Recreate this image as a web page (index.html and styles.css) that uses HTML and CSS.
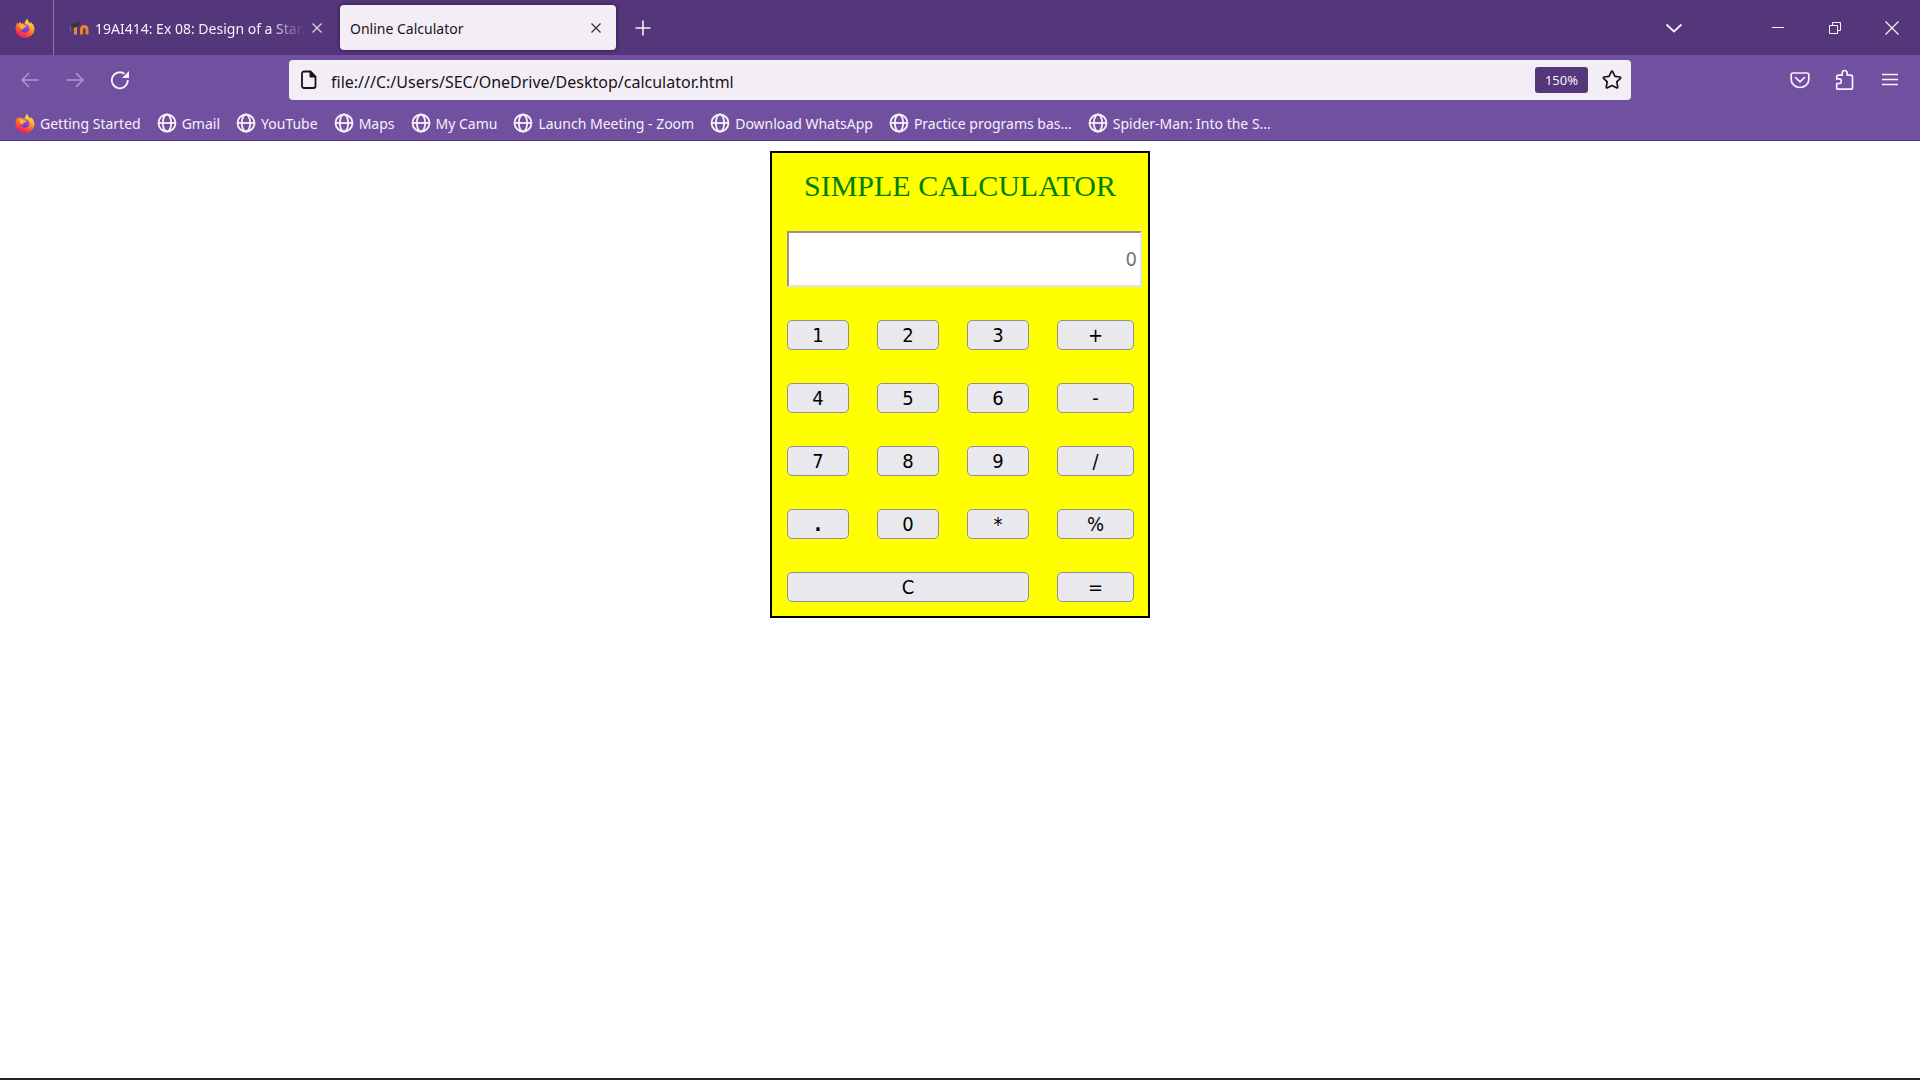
FILE: index.html
```html
<!DOCTYPE html>
<html lang="en">
<head>
<meta charset="utf-8">
<meta name="viewport" content="width=device-width, initial-scale=1">
<title>Online Calculator</title>
<link rel="stylesheet" href="styles.css">
</head>
<body>
<svg class="defs" width="0" height="0" aria-hidden="true">
  <defs>
    <linearGradient id="flame" x1="0.8" y1="0" x2="0.3" y2="1">
      <stop offset="0" stop-color="#fff44f"/>
      <stop offset="0.4" stop-color="#ffa72a"/>
      <stop offset="0.7" stop-color="#ff5038"/>
      <stop offset="1" stop-color="#f0156a"/>
    </linearGradient>
    <linearGradient id="orb" x1="0.7" y1="0" x2="0.3" y2="1">
      <stop offset="0" stop-color="#a04be0"/>
      <stop offset="1" stop-color="#5a3fd0"/>
    </linearGradient>
    <symbol id="fox" viewBox="0 0 20 20">
      <path fill="url(#flame)" d="M12.6 0.4c-.3 1.5.3 2.5 1.400 3.500l1.800 2c-.1-.9-.3-1.500-.6-2.200 2.700 1.600 4.300 4.500 4.300 7.500 0 4.900-4.200 8.500-9.500 8.500S.5 16 .5 11c0-2.800 1-5.200 2.300-6.800l.6 1.700L5.200 3.500l.8 2.300c1.200-.3 2.400-.2 3.400.1.600-2.500 1.700-4.400 3.200-5.500z"/>
      <circle cx="10" cy="10.500" r="4.300" fill="url(#orb)"/>
      <path fill="#ffb52e" d="M4.500 6.500c1.700-.7 3.800-.4 5 .8l2 .6c-.3 1-1.500 1.500-2.900 1.700-.6 1 .2 2-.8 2.200-1.500-.4-3.600-2.500-3.300-5.300z"/>
    </symbol>
    <symbol id="globe" viewBox="0 0 20 20">
      <g fill="none" stroke="currentColor" stroke-width="1.800">
        <circle cx="10" cy="10" r="8.500"/>
        <ellipse cx="10" cy="10" rx="4.200" ry="8.500"/>
        <path d="M1.500 10h17"/>
      </g>
    </symbol>
    <symbol id="cross" viewBox="0 0 12 12">
      <path d="M1.500 1.500l9 9M10.500 1.500l-9 9" fill="none" stroke="currentColor" stroke-width="1.300"/>
    </symbol>
  </defs>
</svg>

<header class="browser">
  <div class="tabstrip">
    <button class="view-button" aria-label="Firefox View"><svg width="20" height="20"><use href="#fox"/></svg></button>
    <div class="tabs">
      <div class="tab">
        <svg class="favicon" width="20" height="16" viewBox="0 0 20 16" aria-hidden="true">
          <path d="M6.500 14.500V7M12.500 14.500V9.500c0-4 5.500-4 5.500 0v5" fill="none" stroke="#e98532" stroke-width="3"/>
          <path d="M1 5L7 2l5-.5-1.500 4L5 8z" fill="#3a3340"/>
          <path d="M1.500 5v8" stroke="#77506a" stroke-width="1.500"/>
        </svg>
        <span class="tab-title fade">19AI414: Ex 08: Design of a Stan</span>
        <button class="tab-close" aria-label="Close tab"><svg width="12" height="12"><use href="#cross"/></svg></button>
      </div>
      <div class="tab active">
        <span class="tab-title">Online Calculator</span>
        <button class="tab-close" aria-label="Close tab"><svg width="12" height="12"><use href="#cross"/></svg></button>
      </div>
    </div>
    <button class="tool" aria-label="New tab"><svg width="16" height="16" viewBox="0 0 16 16"><path d="M8 .5v15M.5 8h15" stroke="currentColor" stroke-width="1.600"/></svg></button>
    <button class="tool list-tabs" aria-label="List all tabs"><svg width="18" height="10" viewBox="0 0 18 10"><path d="M1.500 1.500L9 8.500l7.500-7" fill="none" stroke="currentColor" stroke-width="1.800"/></svg></button>
    <div class="window-controls">
      <button aria-label="Minimize"><svg width="12" height="12" viewBox="0 0 12 12"><path d="M0 5.500h12" stroke="currentColor"/></svg></button>
      <button aria-label="Restore"><svg width="12" height="12" viewBox="0 0 12 12"><path d="M.5 3.500h8v8h-8zM3.500 3V.5h8v8H9" fill="none" stroke="currentColor"/></svg></button>
      <button aria-label="Close"><svg width="14" height="14" viewBox="0 0 14 14"><path d="M.5.5l13 13M13.500.5l-13 13" stroke="currentColor" stroke-width="1.200"/></svg></button>
    </div>
  </div>

  <div class="navbar">
    <div class="nav-group">
      <button class="tool dim" aria-label="Back"><svg width="18" height="16" viewBox="0 0 18 16"><path d="M17.500 8H1M8 1L1 8l7 7" fill="none" stroke="currentColor" stroke-width="1.500"/></svg></button>
      <button class="tool dim" aria-label="Forward"><svg width="18" height="16" viewBox="0 0 18 16"><path d="M.5 8H17M10 1l7 7-7 7" fill="none" stroke="currentColor" stroke-width="1.500"/></svg></button>
      <button class="tool" aria-label="Reload"><svg width="20" height="20" viewBox="0 0 20 20"><path d="M17.800 10A8 8 0 1 1 14.500 3.800" fill="none" stroke="currentColor" stroke-width="1.800"/><path d="M19 1v7h-7z" fill="currentColor"/></svg></button>
    </div>
    <div class="urlbar">
      <svg width="16" height="20" viewBox="0 0 16 20" aria-hidden="true"><path d="M3 1.500h6.500l5 5V16a2 2 0 0 1-2 2H3a2 2 0 0 1-2-2V3.500a2 2 0 0 1 2-2z" fill="none" stroke="currentColor" stroke-width="1.800"/><path d="M9 1.500V7h5.500z" fill="currentColor" stroke="currentColor"/></svg>
      <input class="url" type="text" aria-label="Address" value="file:///C:/Users/SEC/OneDrive/Desktop/calculator.html">
      <button class="zoom">150%</button>
      <button class="star" aria-label="Bookmark this page"><svg width="20" height="20" viewBox="0 0 20 20"><path d="M10 1.200q.5 0 .8.600l2.200 4.500 5 .7q1.200.3.400 1.300l-3.600 3.500.9 5.100q0 1.300-1.200.9L10 15.400l-4.500 2.400q-1.200.4-1.200-.9l.9-5.100-3.600-3.500q-.8-1 .4-1.300l5-.7 2.200-4.500q.3-.6.800-.6z" fill="none" stroke="currentColor" stroke-width="1.700" stroke-linejoin="round"/></svg></button>
    </div>
    <div class="nav-group end">
      <button class="tool" aria-label="Save to Pocket"><svg width="20" height="18" viewBox="0 0 20 18"><path d="M3 2h14q1.800 0 1.800 2v4.500a8.800 8 0 0 1-17.600 0V4Q1.200 2 3 2zM5.500 6.500L10 10.800l4.500-4.300" fill="none" stroke="currentColor" stroke-width="1.700" stroke-linecap="round" stroke-linejoin="round"/></svg></button>
      <button class="tool" aria-label="Extensions"><svg width="20" height="22" viewBox="0 0 20 22"><path d="M2.500 20.200q-.8 0-.8-.8v-4.900h2.400a2.200 2.300 0 0 0 0-4.600H1.700V8q0-1.800 1.800-1.800h3.700V4a2.500 2.500 0 0 1 5 0v2.200h3.600Q17.500 6.200 17.500 8v10.400q0 1.800-1.700 1.800z" fill="none" stroke="currentColor" stroke-width="1.700" stroke-linejoin="round"/></svg></button>
      <button class="tool" aria-label="Menu"><svg width="16" height="14" viewBox="0 0 16 14"><path d="M0 1.500h16M0 6.500h16M0 11.500h16" stroke="currentColor" stroke-width="1.600"/></svg></button>
    </div>
  </div>

  <nav class="bookmarks" aria-label="Bookmarks">
    <a href="#"><svg width="20" height="20"><use href="#fox"/></svg>Getting Started</a>
    <a href="#"><svg width="20" height="20"><use href="#globe"/></svg>Gmail</a>
    <a href="#"><svg width="20" height="20"><use href="#globe"/></svg>YouTube</a>
    <a href="#"><svg width="20" height="20"><use href="#globe"/></svg>Maps</a>
    <a href="#"><svg width="20" height="20"><use href="#globe"/></svg>My Camu</a>
    <a href="#"><svg width="20" height="20"><use href="#globe"/></svg>Launch Meeting - Zoom</a>
    <a href="#"><svg width="20" height="20"><use href="#globe"/></svg>Download WhatsApp</a>
    <a href="#"><svg width="20" height="20"><use href="#globe"/></svg>Practice programs bas...</a>
    <a href="#"><svg width="20" height="20"><use href="#globe"/></svg>Spider-Man: Into the S...</a>
  </nav>
</header>

<main class="page">
  <form class="calculator">
    <h1>SIMPLE CALCULATOR</h1>
    <input class="display" type="text" placeholder="0" aria-label="Result">
    <div class="keys">
      <button type="button">1</button>
      <button type="button">2</button>
      <button type="button">3</button>
      <button type="button">+</button>
      <button type="button">4</button>
      <button type="button">5</button>
      <button type="button">6</button>
      <button type="button">-</button>
      <button type="button">7</button>
      <button type="button">8</button>
      <button type="button">9</button>
      <button type="button">/</button>
      <button type="button" class="point">.</button>
      <button type="button">0</button>
      <button type="button">*</button>
      <button type="button">%</button>
      <button type="button" class="clear">C</button>
      <button type="button">=</button>
    </div>
  </form>
</main>
</body>
</html>
```
FILE: styles.css
```css
* {
  box-sizing: border-box;
}

body {
  margin: 0;
  min-height: 100vh;
  display: flex;
  flex-direction: column;
  background: #fff;
  border-bottom: 2px solid #242424;
  font-family: "Noto Sans", "Open Sans", sans-serif;
  font-size: 14px;
}

button {
  padding: 0;
  border: 0;
  background: none;
  color: inherit;
  font: inherit;
}

svg {
  display: block;
  flex: none;
}

.defs {
  position: absolute;
}

.browser {
  background: #7250a0;
  color: #f6f1fa;
  border-bottom: 1px solid #54367a;
}

.tabstrip {
  display: flex;
  align-items: center;
  height: 55px;
  background: #54367a;
}

.view-button {
  display: flex;
  align-items: center;
  align-self: stretch;
  padding: 0 18px 0 15px;
  border-right: 1px solid #8d75ab;
}

.tabs {
  display: flex;
  gap: 5px;
  padding: 0 5px;
}

.tab {
  display: flex;
  align-items: center;
  gap: 6px;
  width: 276px;
  height: 45px;
  padding: 0 14px 0 10px;
  border-radius: 4px;
}

.tab.active {
  background: #f3eef6;
  color: #15141a;
  box-shadow: 0 0 4px #2b1745;
}

.tab-title {
  flex: 1;
  padding-top: 2px;
  white-space: nowrap;
}

.fade {
  mask-image: linear-gradient(to left, transparent, #000 36px);
}

.tab-close {
  opacity: 0.85;
}

.tool {
  display: grid;
  place-items: center;
  width: 44px;
  height: 40px;
}

.dim {
  opacity: 0.45;
}

.list-tabs {
  margin: 0 53px 0 auto;
}

.window-controls {
  display: flex;
  align-self: stretch;
}

.window-controls button {
  display: grid;
  place-items: center;
  width: 57px;
}

.navbar {
  display: grid;
  grid-template-columns: 1fr minmax(0, 1342px) 1fr;
  padding-top: 5px;
}

.nav-group {
  display: flex;
  gap: 1px;
  padding: 0 8px;
}

.end {
  justify-content: flex-end;
}

.urlbar {
  display: flex;
  align-items: center;
  gap: 14px;
  height: 40px;
  padding: 0 9px 0 12px;
  background: #f3eef6;
  color: #15141a;
  border-radius: 4px;
}

.url {
  flex: 1;
  min-width: 0;
  padding: 3px 0 0;
  border: 0;
  outline: 0;
  background: none;
  color: inherit;
  font: inherit;
  font-size: 16px;
}

.zoom {
  width: 53px;
  height: 26px;
  border-radius: 3px;
  background: #54367a;
  color: #f6f1fa;
  font-size: 13px;
}

.bookmarks {
  display: flex;
  gap: 16px;
  padding: 11px 15px 5px;
  overflow: hidden;
}

.bookmarks a {
  display: flex;
  align-items: center;
  gap: 5px;
  height: 24px;
  color: inherit;
  text-decoration: none;
  white-space: nowrap;
}

.page {
  display: flex;
  justify-content: center;
  padding: 10px 8px;
}

.calculator {
  width: 380px;
  padding: 15px 15px 14px;
  border: 2px solid #000;
  background: #ff0;
}

.calculator h1 {
  margin: 0 0 27px;
  color: green;
  font: 30px/36px "Liberation Serif", "Times New Roman", serif;
  text-align: center;
}

.display {
  display: block;
  width: 355px;
  height: 56px;
  margin-bottom: 33px;
  padding: 0 3px;
  border: 2px solid;
  border-color: #949494 #e3e3e8 #e3e3e8 #949494;
  background: #fff;
  font: 20px "DejaVu Sans Condensed", "DejaVu Sans", sans-serif;
  text-align: right;
}

.display::placeholder {
  color: #757575;
}

.keys {
  display: grid;
  grid-template-columns: 62px 62px 62px 77px;
  gap: 33px 28px;
}

.keys button {
  height: 30px;
  border: 1px solid #8f8f9d;
  border-radius: 5px;
  background: #e9e9ed;
  color: #000;
  font: 20px "DejaVu Sans Condensed", "DejaVu Sans", sans-serif;
}

.keys .point {
  font-weight: bold;
}

.keys .clear {
  grid-column: span 3;
}
```
